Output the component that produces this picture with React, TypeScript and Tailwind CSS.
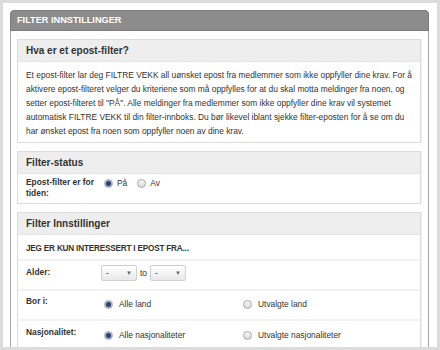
import React from "react"

const font = { fontFamily: '"Liberation Sans", Arial, sans-serif' }

function Radio({ checked = false }: { checked?: boolean }) {
  return (
    <span className="relative inline-flex h-[9px] w-[9px] shrink-0 items-center justify-center rounded-full border border-[#a9a9a9] bg-gradient-to-b from-[#f7f7f7] to-[#d9d9d9]">
      {checked && <span className="h-[5px] w-[5px] rounded-full bg-[#33416b] ring-1 ring-[#9fb0d0]" />}
    </span>
  )
}

function Select() {
  return (
    <span className="inline-flex h-[16px] w-[36px] items-center justify-between rounded-[2px] border border-[#cfcfcf] bg-gradient-to-b from-white to-[#e8e8e8] px-[4px] text-[8.4px] text-[#333]">
      <span>-</span>
      <span className="text-[6px] text-[#666]">▼</span>
    </span>
  )
}

function Section({ title, children }: { title: string; children: React.ReactNode }) {
  return (
    <div className="border border-[#dcdcdc] bg-white shadow-[1px_0_0_#f0f0f0]">
      <div className="flex h-[22px] items-center border-b border-[#e4e4e4] bg-[#eeeeee] px-[8px] text-[10px] font-bold text-[#333]">
        {title}
      </div>
      {children}
    </div>
  )
}

export default function App() {
  return (
    <div
      className="h-[350px] w-[440px] overflow-hidden border-[3px] border-[#dcdcdc] bg-white pt-[7px]"
      style={font}
    >
      <div className="ml-[7px] w-[419px] rounded-t-[5px] border-x border-[#a6a6a6] bg-white">
        <div className="-mx-px flex h-[21px] items-center rounded-t-[4px] border border-[#7c7c7c] bg-[#8c8c8c] px-[6px] text-[9.2px] font-bold text-white">
          FILTER INNSTILLINGER
        </div>

        <div className="flex flex-col gap-[8px] pl-[6px] pr-[7px] pt-[8px]">
          <Section title="Hva er et epost-filter?">
            <p className="px-[8px] pb-[4px] pt-[6px] text-[8.4px] leading-[14px] text-[#333]">
              Et epost-filter lar deg FILTRE VEKK all uønsket epost fra medlemmer som ikke oppfyller dine krav. For å
              aktivere epost-filteret velger du kriteriene som må oppfylles for at du skal motta meldinger fra noen, og
              setter epost-filteret til "PÅ". Alle meldinger fra medlemmer som ikke oppfyller dine krav vil systemet
              automatisk FILTRE VEKK til din filter-innboks. Du bør likevel iblant sjekke filter-eposten for å se om du
              har ønsket epost fra noen som oppfyller noen av dine krav.
            </p>
          </Section>

          <Section title="Filter-status">
            <div className="flex px-[8px] pb-[4px] pt-[3px] text-[8.4px] leading-[11px] text-[#333]">
              <div className="w-[78px] font-bold">Epost-filter er for tiden:</div>
              <div className="flex h-[12px] items-center gap-[4px]">
                <Radio checked />
                <span className="mr-[6px]">På</span>
                <Radio />
                <span>Av</span>
              </div>
            </div>
          </Section>

          <Section title="Filter Innstillinger">
            <div className="text-[8.4px] text-[#333]">
              <div className="flex h-[26px] items-center border-b-2 border-[#f2f2f2] px-[8px] pt-[4px] text-[8.2px] font-bold tracking-[-0.2px]">
                JEG ER KUN INTERESSERT I EPOST FRA...
              </div>
              <div className="flex h-[30px] items-start border-b-2 border-[#f2f2f2] px-[8px] pt-[4px]">
                <div className="w-[75px] pt-[1px] font-bold leading-[12px]">Alder:</div>
                <div className="flex items-center gap-[3px]">
                  <Select />
                  <span>to</span>
                  <Select />
                </div>
              </div>
              <div className="flex h-[30px] items-start border-b-2 border-[#f2f2f2] px-[8px] pt-[4px]">
                <div className="w-[78px] font-bold leading-[12px]">Bor i:</div>
                <div className="flex w-[139px] items-center gap-[6px] pt-[3px]">
                  <Radio checked />
                  <span>Alle land</span>
                </div>
                <div className="flex items-center gap-[6px] pt-[3px]">
                  <Radio />
                  <span>Utvalgte land</span>
                </div>
              </div>
              <div className="flex h-[30px] items-start px-[8px] pt-[5px]">
                <div className="w-[78px] font-bold leading-[12px]">Nasjonalitet:</div>
                <div className="flex w-[139px] items-center gap-[6px] pt-[3px]">
                  <Radio checked />
                  <span>Alle nasjonaliteter</span>
                </div>
                <div className="flex items-center gap-[6px] pt-[3px]">
                  <Radio />
                  <span>Utvalgte nasjonaliteter</span>
                </div>
              </div>
            </div>
          </Section>
        </div>
      </div>
    </div>
  )
}
